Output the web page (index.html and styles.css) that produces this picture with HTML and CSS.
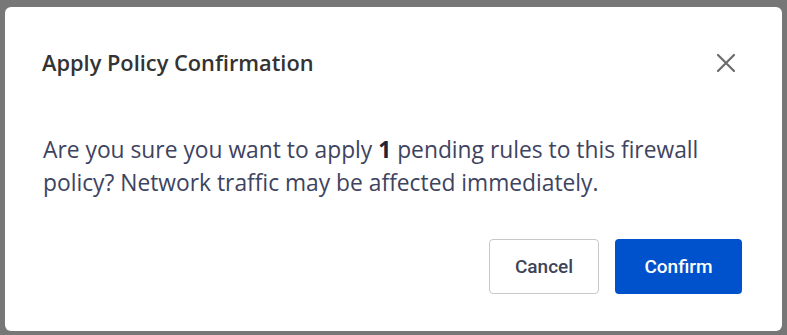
FILE: index.html
```html
<!DOCTYPE html>
<html lang="en">
<head>
    <meta charset="UTF-8">
    <meta name="viewport" content="width=device-width, initial-scale=1.0">
    <title>Apply Policy Confirmation</title>
    <link rel="stylesheet" href="styles.css">
</head>
<body>
    <div class="page">
        <div class="table-row">
            <span class="cell-cidr">172.20.100.0/24</span>
            <span class="cell-port">80</span>
        </div>
    </div>

    <div class="overlay">
        <div class="modal">
            <div class="modal-header">
                <h2 class="modal-title">Apply Policy Confirmation</h2>
                <button class="close-button" aria-label="Close">
                    <svg width="20" height="20" viewBox="0 0 20 20">
                        <path d="M2 2 L18 18 M18 2 L2 18" stroke="#6b6b6b" stroke-width="2.2" stroke-linecap="round" fill="none"/>
                    </svg>
                </button>
            </div>
            <div class="modal-body">
                <p>Are you sure you want to apply <strong>1</strong> pending rules to this firewall policy? Network traffic may be affected immediately.</p>
            </div>
            <div class="modal-footer">
                <button class="btn btn-cancel">Cancel</button>
                <button class="btn btn-confirm">Confirm</button>
            </div>
        </div>
    </div>
</body>
</html>
```

FILE: styles.css
```css
html,
body {
    height: 335px;
    overflow: hidden;
}

body {
    margin: 0;
    font-family: "Open Sans", sans-serif;
    background-color: #777;
    position: relative;
}

.page {
    height: 335px;
    box-sizing: border-box;
    padding-top: 329px;
    overflow: hidden;
}

.table-row {
    display: flex;
    font-size: 18px;
    font-weight: 600;
    color: #0d1526;
    line-height: 24px;
}

.cell-cidr {
    margin-left: 49px;
    width: 260px;
}

.overlay {
    position: absolute;
    top: 0;
    left: 0;
    right: 0;
    bottom: 0;
}

.modal {
    margin: 7px 0 0 5px;
    width: 777px;
    height: 324px;
    background-color: #fff;
    border-radius: 6px;
    box-sizing: border-box;
    padding: 0 40px 0 37px;
}

.modal-header {
    display: flex;
    align-items: center;
    justify-content: space-between;
    padding-top: 42px;
}

.modal-title {
    margin: 0;
    font-size: 21.8px;
    font-weight: 600;
    line-height: 28px;
    color: #333;
}

.close-button {
    background: none;
    border: none;
    padding: 0;
    margin-right: 6px;
    width: 20px;
    height: 20px;
    cursor: pointer;
}

.close-button svg {
    display: block;
}

.modal-body {
    padding-top: 56px;
}

.modal-body p {
    margin: 0 0 0 1px;
    font-size: 22.8px;
    line-height: 33px;
    color: #3e4360;
    max-width: 690px;
}

.modal-body strong {
    font-weight: 700;
    color: #1f2338;
}

.modal-footer {
    display: flex;
    justify-content: flex-end;
    gap: 16px;
    padding-top: 40px;
}

.btn {
    height: 55px;
    border-radius: 4px;
    font-family: Roboto, sans-serif;
    font-size: 19px;
    font-weight: 500;
    cursor: pointer;
}

.btn-cancel {
    width: 110px;
    background-color: #fff;
    border: 1px solid #c8c8c8;
    color: #3e4358;
}

.btn-confirm {
    width: 127px;
    background-color: #0052cc;
    border: none;
    color: #fff;
}
```
